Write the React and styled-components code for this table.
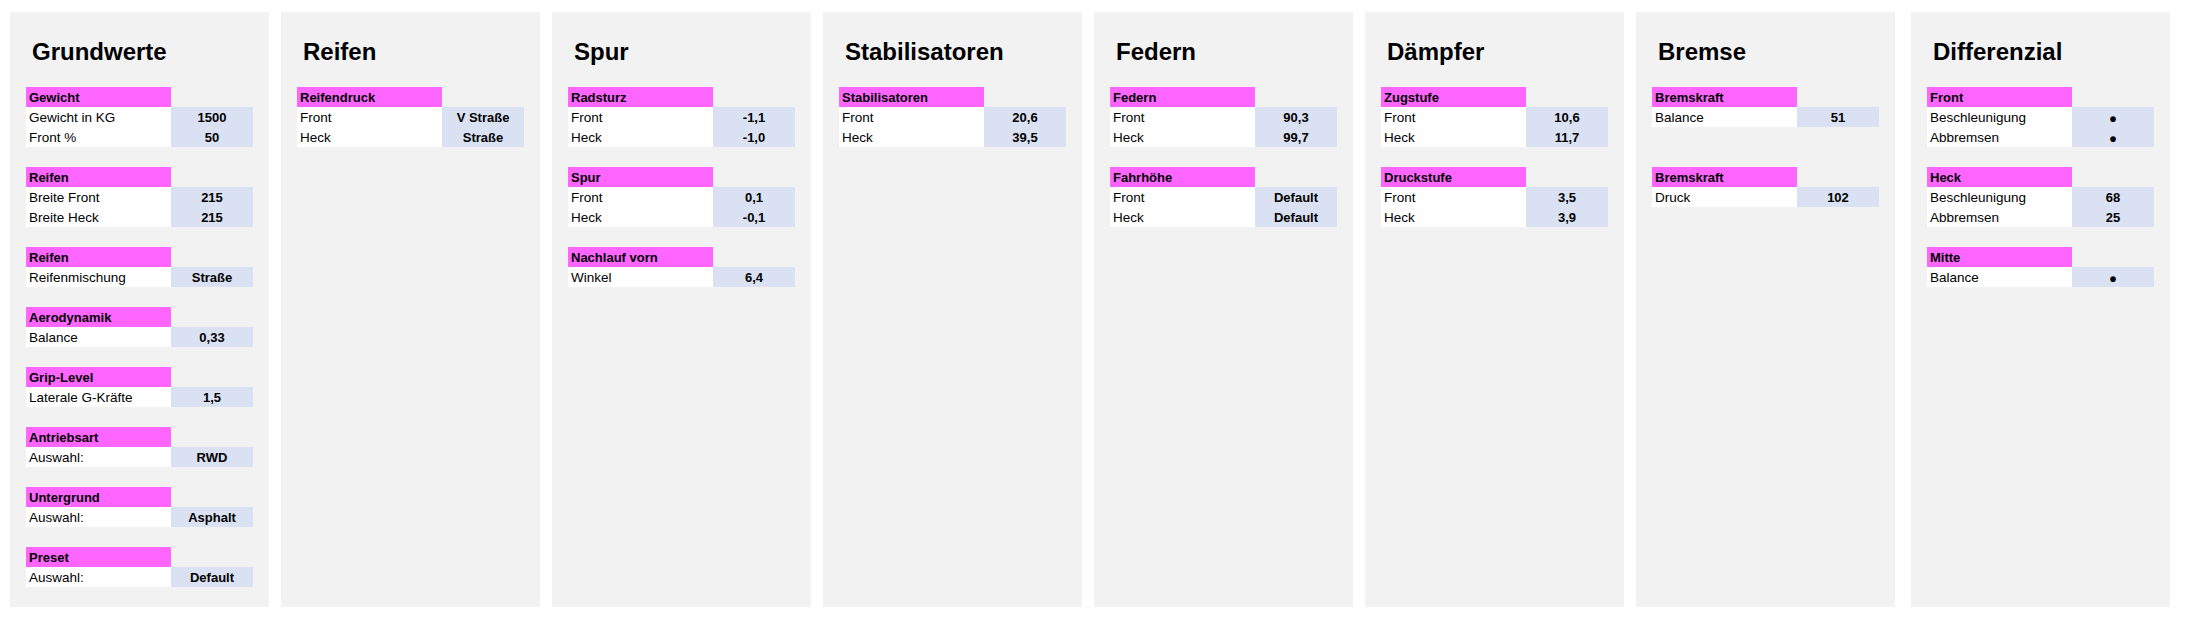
import React from "react";
import styled, { createGlobalStyle } from "styled-components";

const GlobalStyle = createGlobalStyle`
	html, body {
		margin: 0;
		padding: 0;
		background: #ffffff;
		font-family: "Liberation Sans", Arial, sans-serif;
		color: #000000;
	}
`;

const Page = styled.div`
	display: flex;
	align-items: flex-start;
	padding: 12px 0 0 10px;
`;
const Panel = styled.section`
	box-sizing: border-box;
	flex: 0 0 259px;
	width: 259px;
	height: 595px;
	margin-left: ${(p) => (p.$first ? "0px" : p.$spaced ? "16px" : "12px")};
	padding: 26px 16px 0 16px;
	background: #f2f2f2;
`;
const Title = styled.h2`
	margin: 0 0 21px 0;
	padding-left: 6px;
	font-size: 24px;
	line-height: 28px;
	font-weight: 700;
`;
const Block = styled.div`
	display: grid;
	grid-template-columns: 145px 82px;
	margin-top: ${(p) => p.$skip * 20}px;
`;
const Cell = styled.div`
	box-sizing: border-box;
	height: 20px;
	padding: 2px 0 0 3px;
	line-height: 18px;
	white-space: nowrap;
`;
const Header = styled(Cell)`
	background: #ff66ff;
	font-size: 13px;
	font-weight: 700;
`;
const Label = styled(Cell)`
	background: #ffffff;
	font-size: 13.5px;
`;
const Value = styled(Cell)`
	padding-left: 0;
	background: #d9e1f2;
	font-size: 13px;
	font-weight: 700;
	text-align: center;
`;
const Bullet = styled.span`
	display: inline-block;
	height: 18px;
	font-size: 20px;
	line-height: 18px;
	vertical-align: top;
	transform: translateY(1px);
`;

const DOT = "•";

const panels = [
	{
		title: "Grundwerte",
		blocks: [
			{ head: "Gewicht", rows: [["Gewicht in KG", "1500"], ["Front %", "50"]] },
			{ head: "Reifen", rows: [["Breite Front", "215"], ["Breite Heck", "215"]] },
			{ head: "Reifen", rows: [["Reifenmischung", "Straße"]] },
			{ head: "Aerodynamik", rows: [["Balance", "0,33"]] },
			{ head: "Grip-Level", rows: [["Laterale G-Kräfte", "1,5"]] },
			{ head: "Antriebsart", rows: [["Auswahl:", "RWD"]] },
			{ head: "Untergrund", rows: [["Auswahl:", "Asphalt"]] },
			{ head: "Preset", rows: [["Auswahl:", "Default"]] },
		],
	},
	{
		title: "Reifen",
		blocks: [{ head: "Reifendruck", rows: [["Front", "V Straße"], ["Heck", "Straße"]] }],
	},
	{
		title: "Spur",
		blocks: [
			{ head: "Radsturz", rows: [["Front", "-1,1"], ["Heck", "-1,0"]] },
			{ head: "Spur", rows: [["Front", "0,1"], ["Heck", "-0,1"]] },
			{ head: "Nachlauf vorn", rows: [["Winkel", "6,4"]] },
		],
	},
	{
		title: "Stabilisatoren",
		blocks: [{ head: "Stabilisatoren", rows: [["Front", "20,6"], ["Heck", "39,5"]] }],
	},
	{
		title: "Federn",
		blocks: [
			{ head: "Federn", rows: [["Front", "90,3"], ["Heck", "99,7"]] },
			{ head: "Fahrhöhe", rows: [["Front", "Default"], ["Heck", "Default"]] },
		],
	},
	{
		title: "Dämpfer",
		blocks: [
			{ head: "Zugstufe", rows: [["Front", "10,6"], ["Heck", "11,7"]] },
			{ head: "Druckstufe", rows: [["Front", "3,5"], ["Heck", "3,9"]] },
		],
	},
	{
		title: "Bremse",
		blocks: [
			{ head: "Bremskraft", rows: [["Balance", "51"]] },
			{ head: "Bremskraft", rows: [["Druck", "102"]], skip: 2 },
		],
	},
	{
		title: "Differenzial",
		spaced: true,
		blocks: [
			{ head: "Front", rows: [["Beschleunigung", DOT], ["Abbremsen", DOT]] },
			{ head: "Heck", rows: [["Beschleunigung", "68"], ["Abbremsen", "25"]] },
			{ head: "Mitte", rows: [["Balance", DOT]] },
		],
	},
];

const Section = ({ block, first }) => (
	<Block $skip={first ? 0 : block.skip || 1}>
		<Header>{block.head}</Header>
		<div />
		{block.rows.map(([label, value], i) => (
			<React.Fragment key={i}>
				<Label>{label}</Label>
				<Value>{value === DOT ? <Bullet>{DOT}</Bullet> : value}</Value>
			</React.Fragment>
		))}
	</Block>
);

export default function App() {
	return (
		<>
			<GlobalStyle />
			<Page>
				{panels.map((panel, i) => (
					<Panel key={panel.title} $first={i === 0} $spaced={panel.spaced}>
						<Title>{panel.title}</Title>
						{panel.blocks.map((block, j) => (
							<Section key={j} block={block} first={j === 0} />
						))}
					</Panel>
				))}
			</Page>
		</>
	);
}
